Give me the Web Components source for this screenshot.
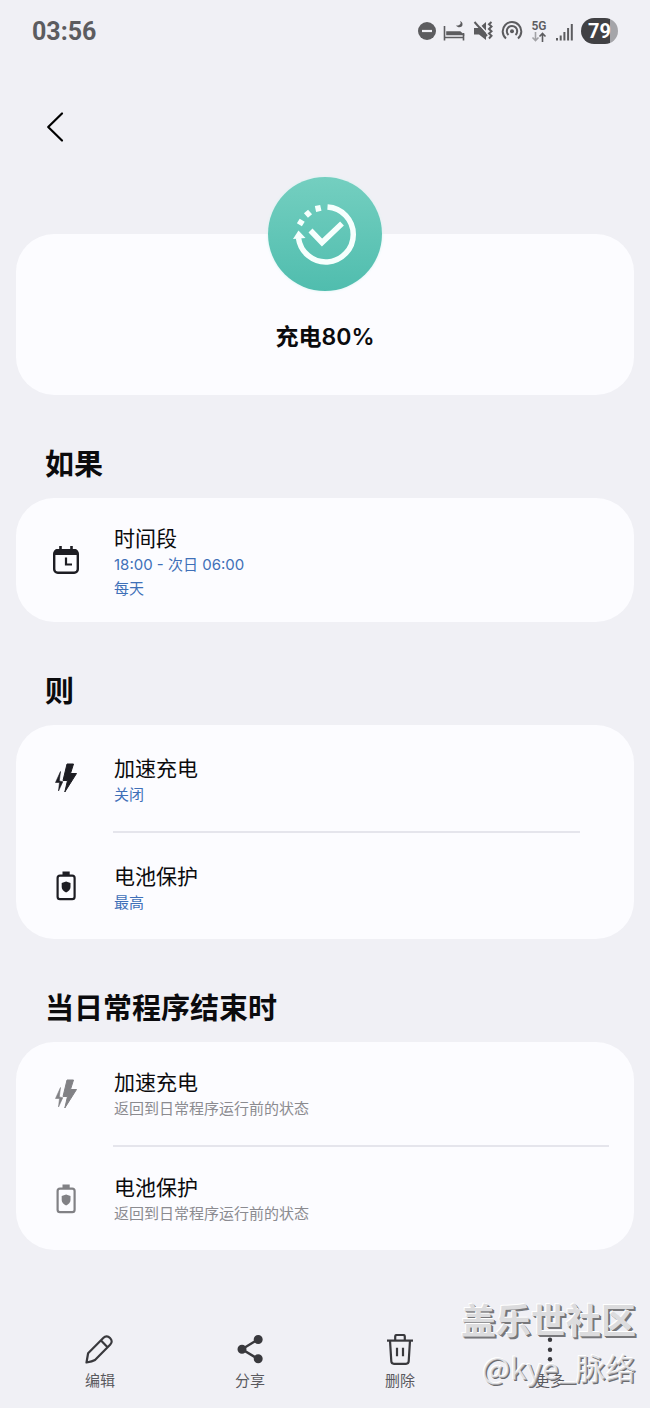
<!DOCTYPE html>
<html lang="zh-CN">
<head>
<meta charset="UTF-8">
<meta name="viewport" content="width=device-width, initial-scale=1">
<title>充电80%</title>
<style>
    body{
        margin: 0;
        background: #f0f0f5;
        color: #0b0b0d;
        font-family: Inter, "Noto Sans CJK SC", sans-serif;
    }
</style>
</head>
<body>
<routine-page>
    <status-bar slot="status" time="03:56" battery="79"></status-bar>
    <back-button slot="nav" label="返回"></back-button>
    <routine-hero>充电80%</routine-hero>

    <routine-section heading="如果" style="--row-top: 26px; --row-bottom: 21px">
        <routine-row icon="calendar" name="时间段">18:00 - 次日 06:00<br>每天</routine-row>
    </routine-section>

    <routine-section heading="则" style="--row-top: 29px; --row-bottom: 24px; --line-end: 54px">
        <routine-row icon="bolt" name="加速充电">关闭</routine-row>
        <routine-row icon="battery" name="电池保护">最高</routine-row>
    </routine-section>

    <routine-section heading="当日常程序结束时" style="--row-top: 26px; --row-bottom: 24px; --line-end: 25px">
        <routine-row icon="bolt" name="加速充电" muted>返回到日常程序运行前的状态</routine-row>
        <routine-row icon="battery" name="电池保护" muted>返回到日常程序运行前的状态</routine-row>
    </routine-section>

    <action-bar slot="actions">
        <action-button icon="edit">编辑</action-button>
        <action-button icon="share">分享</action-button>
        <action-button icon="trash">删除</action-button>
        <action-button icon="more">更多</action-button>
    </action-bar>
    <community-mark slot="mark" community="盖乐世社区">@kye_脉络</community-mark>
</routine-page>

<script>
const icons = {
    calendar: `
        <svg width="32" height="32" viewBox="0 0 32 32" fill="none" stroke="currentColor" stroke-width="2.4">
            <rect x="4.2" y="6.2" width="23.6" height="22.6" rx="3.6"/>
            <path d="M4 11V9a4 4 0 0 1 4-4h16a4 4 0 0 1 4 4v2z" fill="currentColor" stroke="none"/>
            <path d="M10.500 2v5M21.500 2v5" stroke-width="2.6"/>
            <path d="M16 13.500v7h6" stroke-width="2.2"/>
        </svg>`,
    bolt: `
        <svg width="32" height="32" viewBox="0 0 32 32" fill="currentColor" stroke="currentColor" stroke-linejoin="round">
            <path d="M17 2h6.500l-3 9.500h6L14.800 30l2.700-11.500h-4.500z" stroke-width="1"/>
            <path d="M10.500 9.500L5.500 20.500h4L8.500 29l4.300-9.300-3.500-.8z" stroke-width=".6"/>
        </svg>`,
    battery: `
        <svg width="32" height="32" viewBox="0 0 32 32" fill="none" stroke="currentColor" stroke-width="2.2">
            <rect x="7.600" y="5.600" width="17" height="23.500" rx="2.400"/>
            <path d="M12.500 1.500h7.200v4h-7.200z" fill="currentColor" stroke="none"/>
            <path d="M16.100 11.500l4.400 1.600v4c0 2.400-1.900 4.200-4.400 5.400-2.500-1.200-4.400-3-4.400-5.400v-4z" fill="currentColor" stroke="none"/>
        </svg>`,
    edit: `
        <svg width="32" height="32" viewBox="0 0 32 32" fill="none" stroke="currentColor" stroke-width="2.2" stroke-linejoin="round">
            <path d="M2.500 28.500l1.600-9.300L19.500 3.700c2-2 4.500-1.700 6.500.3s2.300 4.500.3 6.500L11 26c-2 1.200-5.300 2-8.500 2.500z"/>
            <path d="M17 6.500l6.800 7"/>
        </svg>`,
    share: `
        <svg width="32" height="32" viewBox="0 0 32 32" fill="currentColor" stroke="currentColor" stroke-width="2.4">
            <path d="M24 5.500L8 15.200 24 25" fill="none"/>
            <circle cx="24.200" cy="5.500" r="3.300"/>
            <circle cx="8" cy="15.200" r="3.300"/>
            <circle cx="24.200" cy="24.800" r="3.300"/>
        </svg>`,
    trash: `
        <svg width="32" height="32" viewBox="0 0 32 32" fill="none" stroke="currentColor" stroke-width="2.2" stroke-linejoin="round">
            <path d="M3 6.600h26"/>
            <path d="M11.200 6.600V2.500c0-1 .5-1.500 1.500-1.500h6.600c1 0 1.500.5 1.500 1.500v4.100"/>
            <path d="M6 6.600l1.300 20.700c.1 1.800 1 2.500 2.700 2.500h12c1.700 0 2.600-.7 2.700-2.500L26 6.600"/>
            <path d="M13 13.800v8.500M19 13.800v8.500"/>
        </svg>`,
    more: `
        <svg width="32" height="32" viewBox="0 0 32 32" fill="currentColor">
            <circle cx="16" cy="5.700" r="2.200"/>
            <circle cx="16" cy="15.700" r="2.200"/>
            <circle cx="16" cy="25.300" r="2.200"/>
        </svg>`,
}

class BaseElement extends HTMLElement{
    constructor(){
        super()
        this.attachShadow({mode: 'open'})
    }

    connectedCallback(){
        this.render()
    }

    render(){
        const template = document.createElement('template')
        template.innerHTML = this.getStyles() + this.getTemplate()
        this.shadowRoot.replaceChildren(template.content.cloneNode(true))
    }
}

class RoutinePage extends BaseElement{
    getStyles(){
        return `
            <style>
                :host{
                    display: flex;
                    flex-direction: column;
                    min-height: 100vh;
                    position: relative;
                }
                main{
                    padding: 0 16px;
                }
                footer{
                    margin-top: auto;
                    padding: 32px 25px 15px;
                }
            </style>`
    }
    getTemplate(){
        return `
            <slot name="status"></slot>
            <slot name="nav"></slot>
            <main><slot></slot></main>
            <footer><slot name="actions"></slot></footer>
            <slot name="mark"></slot>`
    }
}

class StatusBar extends BaseElement{
    getStyles(){
        return `
            <style>
                :host{
                    display: flex;
                    align-items: center;
                    justify-content: space-between;
                    height: 62px;
                    padding: 0 32px;
                    color: #5c5c5f;
                    font-family: Roboto, sans-serif;
                }
                time{
                    font-size: 25px;
                    font-weight: 700;
                }
                .icons{
                    display: flex;
                    align-items: center;
                    gap: 7px;
                }
                .network{
                    display: flex;
                    flex-direction: column;
                    align-items: center;
                    width: 18px;
                    font-size: 12px;
                    font-weight: 600;
                    line-height: 12px;
                }
                .battery{
                    width: 37px;
                    height: 26px;
                    border-radius: 13px;
                    background: linear-gradient(90deg, #414144 79%, #a5a5a9 79%);
                    color: #fff;
                    font-size: 20px;
                    font-weight: 700;
                    line-height: 27px;
                    text-align: center;
                }
            </style>`
    }
    getTemplate(){
        return `
            <time>${this.getAttribute('time')}</time>
            <div class="icons">
                <svg width="18" height="22" viewBox="0 0 18 22">
                    <circle cx="9" cy="11" r="9" fill="currentColor"/>
                    <path d="M4 11h10" stroke="#f0f0f5" stroke-width="2.2"/>
                </svg>
                <svg width="22" height="22" viewBox="0 0 22 22" fill="none" stroke="currentColor" stroke-width="1.6">
                    <path d="M1.500 6v14.500M1.500 17.500h19M20.500 13v7.500"/>
                    <path d="M4 14.500V12h13l3 2.500z" fill="currentColor"/>
                    <path d="M17 1c2 3-1 5-4 4.500 2 3 7 2 6.500-1.500 0-1.500-1-2.500-2.500-3z" fill="currentColor" stroke="none"/>
                </svg>
                <svg width="22" height="22" viewBox="0 0 22 22" fill="none" stroke="currentColor" stroke-width="2">
                    <path d="M2 8h5L14 2v18l-7-5.500H2z" fill="currentColor" stroke="none"/>
                    <path d="M4 1l12 13" stroke="#f0f0f5" stroke-width="1.6"/>
                    <path d="M2.500 2l12.500 14"/>
                    <path d="M19.500 2l-2.500 2.300 2.500 2.300-2.500 2.300 2.500 2.300-2.500 2.300 2.500 2.300-2.500 2.700" stroke-width="2"/>
                </svg>
                <svg width="22" height="22" viewBox="0 0 22 22" fill="none" stroke="currentColor" stroke-width="2">
                    <path d="M5 18.500a9.300 9.300 0 1 1 12 0"/>
                    <path d="M7.500 15a5.200 5.200 0 1 1 7 0"/>
                    <circle cx="11" cy="11.300" r="2" fill="currentColor" stroke="none"/>
                </svg>
                <span class="network">5G
                    <svg width="16" height="10" viewBox="0 0 16 10" fill="none" stroke="currentColor" stroke-width="1.6">
                        <path d="M4.500 0v8.500M1.500 5.500l3 3 3-3" stroke="#a2a2a6"/>
                        <path d="M11.500 10V1.500M8.500 4.500l3-3 3 3"/>
                    </svg>
                </span>
                <svg width="19" height="22" viewBox="0 0 19 22" stroke="currentColor" stroke-width="2">
                    <path d="M2 18V20.500M5.700 15.500v5M9.400 12V20.500M13.100 8v12.500M16.800 4V20.500"/>
                </svg>
                <span class="battery">${this.getAttribute('battery')}</span>
            </div>`
    }
}

class BackButton extends BaseElement{
    getStyles(){
        return `
            <style>
                :host{
                    display: flex;
                    padding: 41px 31px 26px;
                }
                button{
                    display: grid;
                    place-items: center;
                    width: 48px;
                    height: 48px;
                    border: 0;
                    padding: 0;
                    background: none;
                    color: #000;
                }
            </style>`
    }
    getTemplate(){
        return `
            <button type="button" aria-label="${this.getAttribute('label')}">
                <svg width="32" height="32" viewBox="0 0 32 32" fill="none" stroke="currentColor" stroke-width="2.2" stroke-linecap="round" stroke-linejoin="round">
                    <path d="M23 2.500L9.200 16 23 29.500"/>
                </svg>
            </button>`
    }
}

class RoutineHero extends BaseElement{
    getStyles(){
        return `
            <style>
                :host{
                    display: block;
                    padding-top: 57px;
                }
                .card{
                    display: flow-root;
                    padding-bottom: 42px;
                    border-radius: 38px;
                    background: #fcfcff;
                    text-align: center;
                }
                .badge{
                    display: block;
                    width: 114px;
                    height: 114px;
                    margin: -57px auto 30px;
                    border-radius: 50%;
                    background: linear-gradient(#74cfc0, #50bdae);
                    box-shadow: 0 0 3px #d4f3f0;
                }
                h1{
                    margin: 0;
                    font-size: 23px;
                    font-weight: 600;
                    line-height: 32px;
                }
            </style>`
    }
    getTemplate(){
        // dashes on the upper left, a solid arc round the rest
        return `
            <div class="card">
                <svg class="badge" viewBox="0 0 114 114" fill="none" stroke="#f6fffd" stroke-width="5.5">
                    <path d="M59.500 30A27.500 27.500 0 1 1 30.500 61"/>
                    <path d="M25 62l5.500-8.500 7 7.500z" fill="#f6fffd" stroke="none"/>
                    <path d="M30.300 44l5 3M38 34.500l4 4.500M49.500 28.500l1.300 5.800" stroke-width="5.5"/>
                    <path d="M42.500 53.500L54 65.500 74 46.500"/>
                </svg>
                <h1><slot></slot></h1>
            </div>`
    }
}

class RoutineSection extends BaseElement{
    getStyles(){
        return `
            <style>
                :host{
                    display: block;
                }
                h2{
                    margin: 0;
                    padding: 49px 29px 12px;
                    font-size: 29px;
                    font-weight: 700;
                    line-height: 42px;
                }
                .card{
                    border-radius: 38px;
                    background: #fcfcff;
                }
                ::slotted(:not(:last-child)){
                    --line: 2px;
                }
            </style>`
    }
    getTemplate(){
        return `
            <h2>${this.getAttribute('heading')}</h2>
            <div class="card"><slot></slot></div>`
    }
}

class RoutineRow extends BaseElement{
    getStyles(){
        return `
            <style>
                :host{
                    display: block;
                    --detail: #3f70b8;
                    --icon: #1d1d23;
                }
                :host([muted]){
                    --detail: #8b8b90;
                    --icon: #818185;
                }
                .row{
                    display: flex;
                    align-items: center;
                    gap: 32px;
                    padding: 0 34px;
                }
                .icon{
                    display: flex;
                    color: var(--icon);
                }
                .text{
                    padding: var(--row-top) 0 var(--row-bottom);
                }
                h3{
                    margin: 0;
                    font-size: 21px;
                    font-weight: 400;
                    line-height: 29px;
                }
                p{
                    margin: 0;
                    color: var(--detail);
                    font-size: 15px;
                    line-height: 24px;
                }
                .line{
                    height: var(--line, 0);
                    margin: 0 var(--line-end) 0 97px;
                    background: #e5e5ec;
                }
            </style>`
    }
    getTemplate(){
        return `
            <div class="row">
                <span class="icon">${icons[this.getAttribute('icon')]}</span>
                <div class="text">
                    <h3>${this.getAttribute('name')}</h3>
                    <p><slot></slot></p>
                </div>
            </div>
            <div class="line"></div>`
    }
}

class ActionBar extends BaseElement{
    getStyles(){
        return `
            <style>
                :host{
                    display: grid;
                    grid-template-columns: repeat(4, 1fr);
                }
            </style>`
    }
    getTemplate(){
        return `<slot></slot>`
    }
}

class ActionButton extends BaseElement{
    getStyles(){
        return `
            <style>
                :host{
                    display: block;
                }
                button{
                    display: flex;
                    flex-direction: column;
                    align-items: center;
                    gap: 3px;
                    width: 100%;
                    border: 0;
                    padding: 0;
                    background: none;
                    color: #39393d;
                    font-family: inherit;
                    font-size: 15px;
                    line-height: 24px;
                }
                span{
                    color: #59595e;
                }
            </style>`
    }
    getTemplate(){
        return `
            <button type="button">
                ${icons[this.getAttribute('icon')]}
                <span><slot></slot></span>
            </button>`
    }
}

class CommunityMark extends BaseElement{
    getStyles(){
        return `
            <style>
                :host{
                    position: absolute;
                    right: 14px;
                    bottom: 18px;
                    text-align: right;
                    pointer-events: none;
                }
                .community{
                    color: #dcdcde;
                    font-size: 35px;
                    font-weight: 700;
                    line-height: 46px;
                    text-shadow: -1px -1px 0 #fff, 1px 1px 0 #77777a, 2px 2px 0 #77777a;
                }
                .user{
                    color: rgba(205, 205, 208, .6);
                    font-family: "Noto Sans CJK SC", sans-serif;
                    font-size: 30px;
                    line-height: 46px;
                    text-shadow: -1px -1px 0 #fff, 1px 1px 0 #6b6b6e;
                }
            </style>`
    }
    getTemplate(){
        return `
            <div class="community">${this.getAttribute('community')}</div>
            <div class="user"><slot></slot></div>`
    }
}

customElements.define('routine-page', RoutinePage)
customElements.define('status-bar', StatusBar)
customElements.define('back-button', BackButton)
customElements.define('routine-hero', RoutineHero)
customElements.define('routine-section', RoutineSection)
customElements.define('routine-row', RoutineRow)
customElements.define('action-bar', ActionBar)
customElements.define('action-button', ActionButton)
customElements.define('community-mark', CommunityMark)
</script>
</body>
</html>
